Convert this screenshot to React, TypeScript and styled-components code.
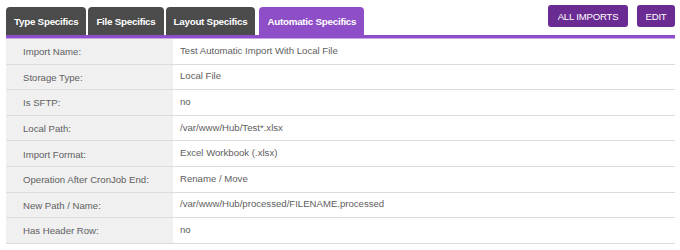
import React from "react";
import styled, { createGlobalStyle } from "styled-components";

const Global = createGlobalStyle`
  html, body { margin: 0; padding: 0; background: #ffffff; }
  body { font-family: "Liberation Sans", Arial, sans-serif; }
`;

const Page = styled.div`
  width: 680px;
  height: 250px;
  padding: 0 5px 0 6px;
  box-sizing: border-box;
  overflow: hidden;
`;

const Header = styled.div`
  display: flex;
  justify-content: space-between;
  align-items: flex-end;
  height: 35px;
  border-bottom: 3px solid #8d4ec7;
  box-shadow: 0 1px 0 #c8a6e6;
`;

const Tabs = styled.div`
  display: flex;
  gap: 2px;
  align-items: flex-end;
`;

const Tab = styled.div<{ $active?: boolean; $gap?: number }>`
  height: 28px;
  padding: 0 8px;
  display: flex;
  align-items: center;
  border-radius: 4px 4px 0 0;
  background: ${(p) => (p.$active ? "#8e4ec8" : "#4b4b4b")};
  color: #ffffff;
  font-family: "Liberation Sans", Arial, sans-serif;
  font-size: 9.8px;
  font-weight: 700;
  letter-spacing: -0.25px;
  margin-right: ${(p) => p.$gap || 0}px;
`;

const Actions = styled.div`
  display: flex;
  gap: 9px;
  align-self: flex-start;
  margin-top: 5px;
`;

const Button = styled.button<{ $w: number }>`
  height: 22px;
  width: ${(p) => p.$w}px;
  padding: 0;
  border: none;
  border-radius: 3px;
  background: #6a2b92;
  color: #ffffff;
  font-family: "Liberation Sans", Arial, sans-serif;
  font-size: 9.6px;
  letter-spacing: -0.2px;
`;

const Table = styled.div`
  margin-top: 1px;
`;

const Row = styled.div`
  display: grid;
  grid-template-columns: 167px 1fr;
  height: 25.6px;
  box-sizing: border-box;
  border-bottom: 1px solid #dcdcdc;
  font-family: "Liberation Sans", Arial, sans-serif;
  font-size: 9.6px;
  color: #606060;
`;

const Label = styled.div`
  background: #f0f0f0;
  padding-left: 17px;
  display: flex;
  align-items: center;
`;

const Value = styled.div`
  padding-left: 7px;
  display: flex;
  align-items: center;
  padding-bottom: 2px;
`;

const LabelText = styled.span`
  padding-top: 1px;
`;

const rows: [string, string][] = [
  ["Import Name:", "Test Automatic Import With Local File"],
  ["Storage Type:", "Local File"],
  ["Is SFTP:", "no"],
  ["Local Path:", "/var/www/Hub/Test*.xlsx"],
  ["Import Format:", "Excel Workbook (.xlsx)"],
  ["Operation After CronJob End:", "Rename / Move"],
  ["New Path / Name:", "/var/www/Hub/processed/FILENAME.processed"],
  ["Has Header Row:", "no"],
];

export default function App() {
  return (
    <Page>
      <Global />
      <Header>
        <Tabs>
          <Tab>Type Specifics</Tab>
          <Tab>File Specifics</Tab>
          <Tab $gap={2}>Layout Specifics</Tab>
          <Tab $active>Automatic Specifics</Tab>
        </Tabs>
        <Actions>
          <Button $w={80}>ALL IMPORTS</Button>
          <Button $w={38}>EDIT</Button>
        </Actions>
      </Header>
      <Table>
        {rows.map(([l, v]) => (
          <Row key={l}>
            <Label>
              <LabelText>{l}</LabelText>
            </Label>
            <Value>{v}</Value>
          </Row>
        ))}
      </Table>
    </Page>
  );
}
